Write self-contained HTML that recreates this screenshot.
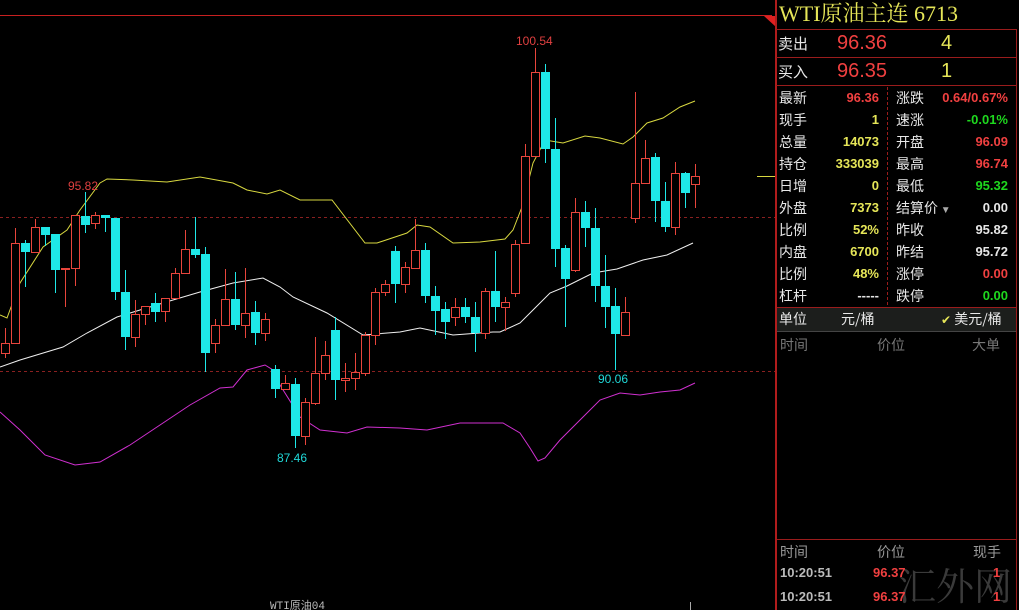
<!DOCTYPE html>
<html style="width:1019px;height:610px;overflow:hidden"><head><meta charset="utf-8"><style>
*{margin:0;padding:0;box-sizing:border-box}
body{width:1019px;height:610px;background:#000;overflow:hidden;position:relative;font-family:"Liberation Sans","Noto Sans CJK SC",sans-serif}
.a{position:absolute;white-space:nowrap}
.l{font-size:14px;color:#e8e8e8;font-family:"Noto Sans CJK SC","WenQuanYi Zen Hei",sans-serif}
.v{font-size:13px;font-weight:bold;text-align:right}
.r{color:#f04040}.y{color:#e6e658}.g{color:#1ed81e}.w{color:#e6e6e6}
</style></head><body>
<svg class="a" style="left:0;top:0" width="776" height="610">
<line x1="0" y1="15.5" x2="772" y2="15.5" stroke="#c82020"/>
<polygon points="764,16 776,16 776,27" fill="#e02020"/>
<line x1="0" y1="217.5" x2="775" y2="217.5" stroke="#8a2020" stroke-dasharray="3,3"/>
<line x1="0" y1="371.5" x2="775" y2="371.5" stroke="#8a2020" stroke-dasharray="3,3"/>
<line x1="757" y1="176.5" x2="775" y2="176.5" stroke="#d8d840"/>
<polyline fill="none" stroke="#d8d840" points="0,315 7,318 20,283 43,247 67,230 80,210 100,183 107,179 133,180 167,182 200,177 233,183 247,190 267,194 280,190 300,200 332,200 365,243 377,243 407,233 417,225 430,227 453,243 480,242 505,239 513,230 522,207 533,163 545,140 563,143 585,136 600,138 623,144 633,137 647,123 663,118 680,107 695,101"/>
<polyline fill="none" stroke="#f0f0f0" points="0,367 20,360 63,347 87,333 117,317 140,310 173,300 200,292 233,283 263,278 280,287 293,297 327,313 363,335 400,332 420,328 453,335 493,332 500,332 520,323 533,310 550,293 567,286 593,273 617,269 643,260 667,255 693,243"/>
<polyline fill="none" stroke="#d030d0" points="0,412 20,430 45,455 75,465 100,462 130,445 160,425 190,405 220,388 233,387 247,370 265,365 273,370 280,385 300,417 320,430 347,433 367,427 400,428 427,430 460,423 503,423 520,433 530,448 538,461 545,458 560,440 580,420 600,400 620,393 640,395 660,392 680,390 695,383"/>
<g id="c"></g>
<text x="68" y="190" fill="#e04040" font-size="12" font-family="Liberation Sans">95.82</text>
<text x="516" y="45" fill="#e04040" font-size="12" font-family="Liberation Sans">100.54</text>
<text x="277" y="462" fill="#20d8d8" font-size="12" font-family="Liberation Sans">87.46</text>
<text x="598" y="383" fill="#20d8d8" font-size="12" font-family="Liberation Sans">90.06</text>
<text x="270" y="609" fill="#bbb" font-size="11" font-family="Liberation Mono,Noto Sans CJK SC,monospace">WTI原油04</text>
<line x1="690.5" y1="602" x2="690.5" y2="610" stroke="#aaa"/>
</svg>
<div class="a" style="left:775px;top:0;width:2px;height:610px;background:#b01c1c"></div>
<div class="a" style="left:1016px;top:29px;width:1px;height:581px;background:#9a1c1c"></div>
<div class="a" style="left:779px;top:0px;font-size:22px;line-height:28px;color:#e6e658;font-family:'Liberation Serif','Noto Serif CJK SC',serif">WTI原油主连 6713</div>
<div class="a" style="left:776px;top:29px;width:241px;height:1px;background:#9a1c1c"></div>
<div class="a" style="left:776px;top:57px;width:241px;height:1px;background:#9a1c1c"></div>
<div class="a" style="left:776px;top:85px;width:241px;height:1px;background:#9a1c1c"></div>
<div class="a l" style="left:778px;top:33px;font-size:15px">卖出</div>
<div class="a r" style="left:837px;top:32px;font-size:20px">96.36</div>
<div class="a y" style="left:941px;top:32px;font-size:20px">4</div>
<div class="a l" style="left:778px;top:61px;font-size:15px">买入</div>
<div class="a r" style="left:837px;top:60px;font-size:20px">96.35</div>
<div class="a y" style="left:941px;top:60px;font-size:20px">1</div>
<div class="a" style="left:887px;top:87px;height:218px;border-left:1px dashed #9a1c1c"></div>
<div class="a" style="left:779px;top:87px;width:100px;font-size:14px;line-height:22px">
<div style="position:relative;height:22px"><span class="l">最新</span><span class="a v r" style="right:0;top:0">96.36</span></div>
<div style="position:relative;height:22px"><span class="l">现手</span><span class="a v y" style="right:0;top:0">1</span></div>
<div style="position:relative;height:22px"><span class="l">总量</span><span class="a v y" style="right:0;top:0">14073</span></div>
<div style="position:relative;height:22px"><span class="l">持仓</span><span class="a v y" style="right:0;top:0">333039</span></div>
<div style="position:relative;height:22px"><span class="l">日增</span><span class="a v y" style="right:0;top:0">0</span></div>
<div style="position:relative;height:22px"><span class="l">外盘</span><span class="a v y" style="right:0;top:0">7373</span></div>
<div style="position:relative;height:22px"><span class="l">比例</span><span class="a v y" style="right:0;top:0">52%</span></div>
<div style="position:relative;height:22px"><span class="l">内盘</span><span class="a v y" style="right:0;top:0">6700</span></div>
<div style="position:relative;height:22px"><span class="l">比例</span><span class="a v y" style="right:0;top:0">48%</span></div>
<div style="position:relative;height:22px"><span class="l">杠杆</span><span class="a v w" style="right:0;top:0">-----</span></div>
</div>
<div class="a" style="left:896px;top:87px;width:112px;font-size:14px;line-height:22px">
<div style="position:relative;height:22px"><span class="l">涨跌</span><span class="a v r" style="right:0;top:0">0.64/0.67%</span></div>
<div style="position:relative;height:22px"><span class="l">速涨</span><span class="a v g" style="right:0;top:0">-0.01%</span></div>
<div style="position:relative;height:22px"><span class="l">开盘</span><span class="a v r" style="right:0;top:0">96.09</span></div>
<div style="position:relative;height:22px"><span class="l">最高</span><span class="a v r" style="right:0;top:0">96.74</span></div>
<div style="position:relative;height:22px"><span class="l">最低</span><span class="a v g" style="right:0;top:0">95.32</span></div>
<div style="position:relative;height:22px"><span class="l">结算价</span><span style="color:#aaa;font-size:10px"> ▼</span><span class="a v w" style="right:0;top:0">0.00</span></div>
<div style="position:relative;height:22px"><span class="l">昨收</span><span class="a v w" style="right:0;top:0">95.82</span></div>
<div style="position:relative;height:22px"><span class="l">昨结</span><span class="a v w" style="right:0;top:0">95.72</span></div>
<div style="position:relative;height:22px"><span class="l">涨停</span><span class="a v r" style="right:0;top:0">0.00</span></div>
<div style="position:relative;height:22px"><span class="l">跌停</span><span class="a v g" style="right:0;top:0">0.00</span></div>
</div>
<div class="a" style="left:777px;top:307px;width:239px;height:25px;background:#1c1e1c;border-top:1px solid #9a1c1c;border-bottom:1px solid #444"></div>
<div class="a l" style="left:779px;top:309px">单位</div>
<div class="a l" style="left:841px;top:309px">元/桶</div>
<div class="a l" style="left:941px;top:309px"><span style="color:#e6e658;font-size:12px">✔</span> 美元/桶</div>
<div class="a l" style="left:780px;top:335px;color:#777">时间</div>
<div class="a l" style="left:877px;top:335px;color:#777">价位</div>
<div class="a l" style="left:972px;top:335px;color:#777">大单</div>
<div class="a" style="left:777px;top:539px;width:239px;height:1px;background:#9a1c1c"></div>
<div class="a" style="left:898px;top:562px;font-size:38px;line-height:44px;color:#3a3a3a;font-family:'Noto Serif CJK SC',serif">汇外网</div>
<div class="a l" style="left:780px;top:542px;color:#999">时间</div>
<div class="a l" style="left:877px;top:542px;color:#999">价位</div>
<div class="a l" style="left:973px;top:542px;color:#999">现手</div>
<div class="a v" style="left:780px;top:565px;color:#bbb">10:20:51</div>
<div class="a v r" style="left:873px;top:565px">96.37</div>
<div class="a v r" style="left:993px;top:565px">1</div>
<div class="a v" style="left:780px;top:589px;color:#bbb">10:20:51</div>
<div class="a v r" style="left:873px;top:589px">96.37</div>
<div class="a v r" style="left:993px;top:589px">1</div>
<script>
var d=[[5,'r',343,353,328,358],[15,'r',243,343,228,343],[25,'c',243,252,240,287],[35,'r',227,252,219,252],[45,'c',227,235,227,246],[55,'c',234,270,234,293],[65,'r',268,269,268,307],[75,'r',215,268,215,286],[85,'c',216,225,192,233],[95,'r',215,223,212,229],[105,'c',215,218,215,232],[115,'c',218,292,218,300],[125,'c',292,337,270,350],[135,'r',314,337,300,347],[145,'r',306,314,306,325],[155,'c',303,312,293,322],[165,'r',298,311,298,322],[175,'r',273,298,268,298],[185,'r',249,273,230,273],[195,'c',249,255,217,258],[205,'c',254,353,247,372],[215,'r',325,343,319,353],[225,'r',299,325,269,325],[235,'c',299,325,272,330],[245,'r',313,325,268,338],[255,'c',312,333,301,345],[265,'r',319,333,313,341],[275,'c',369,389,365,398],[285,'r',383,389,375,389],[295,'c',384,436,378,448],[305,'r',402,436,398,445],[315,'r',373,403,337,405],[325,'r',355,373,341,380],[335,'c',330,380,317,400],[345,'r',378,380,363,392],[355,'r',372,378,353,390],[365,'r',335,373,332,376],[375,'r',292,335,288,345],[385,'r',284,292,280,296],[395,'c',251,284,246,303],[405,'r',267,284,262,293],[415,'r',250,268,219,268],[425,'c',250,296,243,303],[435,'c',296,311,286,335],[445,'c',309,322,302,339],[455,'r',307,317,298,326],[465,'c',307,317,298,323],[475,'c',317,333,302,352],[485,'r',291,333,288,339],[495,'c',291,307,251,322],[505,'r',302,307,297,331],[515,'r',244,293,240,297],[525,'r',156,243,144,243],[535,'r',72,156,48,156],[545,'c',72,149,64,163],[555,'c',149,249,118,267],[565,'c',248,279,245,327],[575,'r',212,270,198,272],[585,'c',212,228,201,247],[595,'c',228,286,208,302],[605,'c',286,307,255,328],[615,'c',306,334,288,370],[625,'r',312,335,297,335],[635,'r',183,218,92,223],[645,'r',158,183,140,183],[655,'c',157,201,153,222],[665,'c',201,227,182,232],[675,'r',173,227,162,235],[685,'c',173,193,172,208],[695,'r',176,184,164,208]];
var s='';d.forEach(function(c){var x=c[0],col=c[1]=='r'?'#e8453c':'#1ee8e8';
s+='<line x1="'+(x+.5)+'" y1="'+c[4]+'" x2="'+(x+.5)+'" y2="'+c[5]+'" stroke="'+col+'"/>';
if(c[1]=='r')s+='<rect x="'+(x-3.5)+'" y="'+(c[2]+.5)+'" width="8" height="'+Math.max(1,c[3]-c[2])+'" fill="#000" stroke="'+col+'"/>';
else s+='<rect x="'+(x-4)+'" y="'+c[2]+'" width="9" height="'+Math.max(1,c[3]-c[2])+'" fill="'+col+'"/>';});
document.getElementById('c').innerHTML=s;
</script>
</body></html>
